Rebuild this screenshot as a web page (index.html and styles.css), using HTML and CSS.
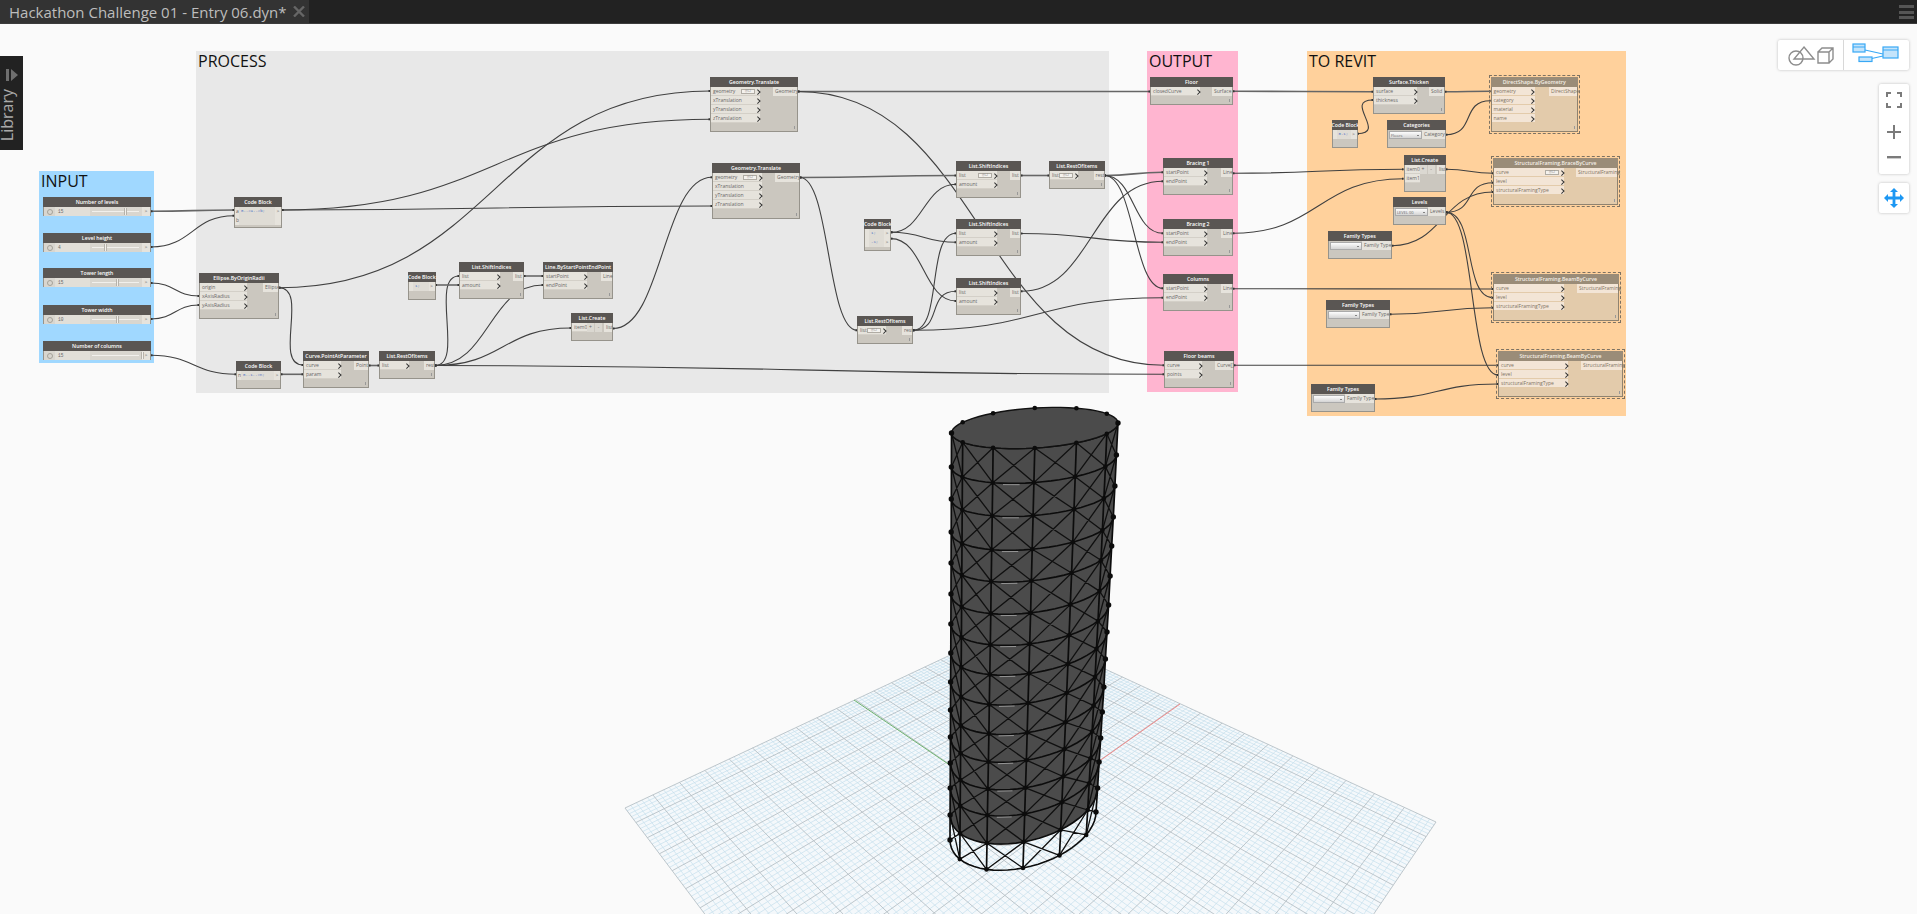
FILE: index.html
```html
<!DOCTYPE html>
<html lang="en">
<head>
    <meta charset="UTF-8">
    <title>Hackathon Challenge 01 - Entry 06.dyn*</title>
    <link rel="stylesheet" href="styles.css">
</head>
<body>
    <div class="titlebar">
        <div class="tab">
            <span class="tab-name">Hackathon Challenge 01 - Entry 06.dyn*</span>
            <svg class="tab-close" width="12" height="11" viewBox="0 0 12 11"><path d="M1 0.5 L11 10.5 M11 0.5 L1 10.5"/></svg>
        </div>
        <div class="menu-btn"><i></i><i></i><i></i></div>
    </div>

    <div class="canvas">
        <div class="world">
            <svg id="scene" class="layer" width="1917" height="914"></svg>

            <div class="group g-input">INPUT</div>
            <div class="group g-process">PROCESS</div>
            <div class="group g-output">OUTPUT</div>
            <div class="group g-revit">TO REVIT</div>

            <svg id="wires" class="layer" width="1917" height="914"></svg>
            <div id="nodes" class="layer"></div>
        </div>

        <div class="library">
            <svg width="12" height="12" viewBox="0 0 12 12"><path d="M0 0h3v12H0z M5 0l7 6-7 6z"/></svg>
            <span>Library</span>
        </div>

        <div class="nav">
            <div class="nav-box switcher">
                <div class="switch-btn">
                    <svg width="48" height="24" viewBox="0 0 48 24">
                        <g fill="none" stroke="#8d8d8d" stroke-width="1.4">
                            <circle cx="9" cy="15" r="7"/>
                            <path d="M17 4 L27 16 L7 16 Z"/>
                            <path d="M31 9 H42 V20 H31 Z M31 9 L35 5 H46 V16 L42 20 M42 9 L46 5"/>
                        </g>
                    </svg>
                </div>
                <div class="switch-btn">
                    <svg width="50" height="24" viewBox="0 0 50 24">
                        <g stroke="#38a8f5" stroke-width="1.2" fill="#c4e4fb">
                            <path d="M13 7 L31 11 M13 17 L31 13" fill="none"/>
                            <rect x="1" y="1" width="12" height="8"/>
                            <rect x="7" y="14" width="13" height="4.5"/>
                            <rect x="31" y="4" width="15" height="11"/>
                            <path d="M1 4 H13 M31 7 H46" fill="none"/>
                        </g>
                    </svg>
                </div>
            </div>
            <div class="nav-box zoomer">
                <svg width="16" height="16" viewBox="0 0 16 16"><path class="ico" d="M0 5V0h5v2H2v3z M11 0h5v5h-2V2h-3z M0 11h2v3h3v2H0z M14 11h2v5h-5v-2h3z"/></svg>
                <svg width="14" height="14" viewBox="0 0 14 14"><path class="ico" d="M6 0h2v6h6v2H8v6H6V8H0V6h6z"/></svg>
                <svg width="14" height="3" viewBox="0 0 14 3"><path class="ico" d="M0 0h14v2.4H0z"/></svg>
            </div>
            <div class="nav-box pan">
                <svg width="20" height="20" viewBox="0 0 20 20"><path fill="#1c97f3" d="M10 0l4 4h-2.6v4.6H16V6l4 4-4 4v-2.6h-4.6V16H14l-4 4-4-4h2.6v-4.6H4V14l-4-4 4-4v2.6h4.6V4H6z"/></svg>
            </div>
        </div>
    </div>

    <script src="graph.js"></script>
</body>
</html>
```

FILE: styles.css
```css
* { box-sizing: border-box; }
html, body { margin: 0; height: 100%; overflow: hidden; }
body { display: flex; flex-direction: column; font-family: "Open Sans", "Liberation Sans", sans-serif; background: #fafafa; }

/* title bar */
.titlebar { height: 24px; flex: none; display: flex; justify-content: space-between; background: #222; border-bottom: 1px solid #3c3c3c; }
.tab { width: 309px; display: flex; align-items: center; background: #333; padding-left: 9px; }
.tab-name { color: #bdbdbd; font-size: 15px; width: 284px; white-space: nowrap; }
.tab-close path { stroke: #666; stroke-width: 2.4; fill: none; }
.menu-btn { width: 15px; margin: 5px 3px 0 0; display: flex; flex-direction: column; gap: 2.5px; }
.menu-btn i { height: 3px; background: #555; }

/* canvas */
.canvas { flex: 1; position: relative; overflow: hidden; background: #fafafa; }
.world { position: absolute; left: 0; top: -24px; width: 1917px; height: 914px; }
.layer { position: absolute; left: 0; top: 0; }

.group { position: absolute; font-size: 16px; line-height: 20px; color: #111; padding-left: 2px; }
.g-input { left: 39px; top: 171px; width: 115px; height: 192px; background: #a0d8ff; }
.g-process { left: 196px; top: 51px; width: 913px; height: 342px; background: #e8e8e8; }
.g-output { left: 1147px; top: 51px; width: 91px; height: 341px; background: #ffb5d0; }
.g-revit { left: 1307px; top: 51px; width: 319px; height: 365px; background: #ffd19c; }

.wire { fill: none; stroke: #404040; stroke-width: 1.1; }
.wire.thick { stroke: #666; stroke-width: 1.6; }
.port-dot { fill: #333; }

/* nodes */
.node { position: absolute; background: #cbc7bf; border: 1px solid #96938b; border-top: 0; font-size: 5px; line-height: 9px; color: #666; }
.node::after { content: ""; position: absolute; right: 2px; bottom: 2px; width: 1px; height: 3px; background: #999; }
.node.plain::after { display: none; }
.node-head { height: 10px; margin: 0 -1px; background: #5a5653; color: #fff; font-size: 5.2px; font-weight: 600; line-height: 10px; text-align: center; white-space: nowrap; overflow: hidden; }
.node-body { display: flex; justify-content: space-between; align-items: flex-start; }
.ports-in, .ports-out { display: flex; flex-direction: column; flex: none; }
.port { position: relative; height: 9px; padding: 0 2px; background: #e6e3dc; border-bottom: 1px solid #d4d0c8; white-space: nowrap; }
.ports-out .port { text-align: right; border-bottom: 0; }
.ports-in .port::after { content: ""; position: absolute; right: 1px; top: 3px; width: 2.5px; height: 2.5px; border-top: 1px solid #333; border-right: 1px solid #333; transform: rotate(45deg); }
.lvl { position: absolute; right: 5px; top: 2px; width: 14px; height: 5px; background: #f4f2ee; border: 1px solid #b0aca4; font-size: 3px; line-height: 3px; color: #888; text-align: center; }

.node.warn { background: #e3cbab; border-color: #8f8370; outline: 1px dashed #7d7263; outline-offset: 1px; color: #7d7263; }
.node.warn .node-head { background: #9a8c78; color: #f5efe6; }
.node.warn .port { background: #f3e5d6; border-bottom-color: #e3cbab; }

/* sliders */
.slider-body { display: flex; height: 9px; background: #d9d6cf; }
.slider-min { width: 11px; display: flex; align-items: center; justify-content: center; }
.slider-min i { width: 6px; height: 6px; border-radius: 50%; border: 1px solid #a5a29a; }
.slider-val { width: 35px; padding-left: 3px; background: #e2dfd8; font-family: "Liberation Mono", monospace; font-size: 4.5px; color: #666; }
.slider-track { position: relative; flex: 1; }
.slider-track::before { content: ""; position: absolute; left: 2px; right: 3px; top: 4px; height: 1px; background: #f2f0ec; }
.slider-thumb { position: absolute; top: 1px; width: 3px; height: 7px; background: #f2f0ec; border: 1px solid #b6b2aa; border-width: 0 1px; }
.slider-out { width: 8px; background: #e6e3dc; text-align: center; font-size: 5px; }

/* code block */
.code-row { display: flex; height: 9px; }
.code-in { width: 4px; background: #e6e3dc; padding-left: 1px; }
.code-text { flex: 1; padding-left: 2px; background: #dfdcd5; font-family: "Liberation Mono", monospace; font-size: 4px; color: #4a6fc4; white-space: nowrap; overflow: hidden; }
.code-out { width: 6px; background: #e6e3dc; text-align: center; }

/* dropdown nodes and list create */
.drop { width: 34px; height: 8px; margin: 1px 0 0 1px; position: relative; padding-left: 1px; line-height: 7px; background: linear-gradient(#fdfdfd, #d4d4d4); border: 1px solid #aaa; font-size: 4px; color: #666; overflow: hidden; }
.drop::after { content: ""; position: absolute; right: 2px; top: 3px; border: 1.2px solid transparent; border-top-color: #222; }
.btns { position: absolute; top: 0; display: flex; gap: 1px; }
.btns b { width: 7px; height: 9px; background: #dbd8d1; font-weight: 400; text-align: center; }
.port.bare::after { display: none; }

/* library tab */
.library { position: absolute; left: 0; top: 32px; width: 23px; height: 94px; background: #222; display: flex; flex-direction: column; align-items: center; overflow: hidden; padding-top: 13px; }
.library svg path { fill: #6f6f6f; }
.library span { writing-mode: vertical-rl; transform: rotate(180deg); color: #a9a9a9; font-size: 16px; line-height: 16px; margin: 8px 0 0 -9px; }

/* navigation buttons */
.nav { position: absolute; right: 8px; top: 16px; display: flex; flex-direction: column; align-items: flex-end; }
.nav-box { background: #fff; border-radius: 2px; box-shadow: 0 0 3px rgba(0, 0, 0, 0.25); display: flex; align-items: center; }
.switcher { width: 131px; height: 30px; }
.switch-btn { flex: 1; height: 100%; display: flex; align-items: center; justify-content: center; }
.switch-btn + .switch-btn { border-left: 1px solid #d8d8d8; }
.zoomer { width: 30px; height: 90px; margin-top: 14px; flex-direction: column; justify-content: space-between; padding: 8px 0 15px; }
.ico { fill: #7b7b7b; }
.pan { width: 30px; height: 30px; margin-top: 9px; justify-content: center; }
```

FILE: graph.js
```js
// x, y, x2, y2 are in screenshot pixels
const nodes = [
    { t: 'Number of levels', kind: 'slider', x: 43, y: 197, val: '15', thumb: 124 },
    { t: 'Level height', kind: 'slider', x: 43, y: 233, val: '4', thumb: 104 },
    { t: 'Tower length', kind: 'slider', x: 43, y: 268, val: '15', thumb: 116 },
    { t: 'Tower width', kind: 'slider', x: 43, y: 305, val: '10', thumb: 116 },
    { t: 'Number of columns', kind: 'slider', x: 43, y: 341, val: '15', thumb: 141 },

    { t: 'Code Block', kind: 'code', x: 234, y: 197, x2: 282, y2: 228, lines: [['a', '0..#a..#b;'], ['b', '']] },
    { t: 'Code Block', kind: 'code', x: 236, y: 361, x2: 281, y2: 389, lines: [['n', '0..1..#n;']] },
    { t: 'Code Block', kind: 'code', x: 408, y: 272, x2: 435.5, y2: 300, lines: [['', '1;']] },
    { t: 'Code Block', kind: 'code', x: 864, y: 219, x2: 891, y2: 251, lines: [['', '1;'], ['', '-1;']] },
    { t: 'Code Block', kind: 'code', x: 1331.5, y: 120, x2: 1357.5, y2: 148, lines: [['', '0.1;']] },

    { t: 'Ellipse.ByOriginRadii', x: 199, y: 273, x2: 279, y2: 319, ins: ['origin', 'xAxisRadius', 'yAxisRadius'], inW: 47, outs: ['Ellipse'], outW: 15 },
    { t: 'Curve.PointAtParameter', x: 303, y: 351, x2: 369, y2: 388, ins: ['curve', 'param'], inW: 37, outs: ['Point'], outW: 14 },
    { t: 'List.RestOfItems', x: 379, y: 351, x2: 435, y2: 379, ins: ['list'], inW: 29, outs: ['rest'], outW: 10 },
    { t: 'List.ShiftIndices', x: 459, y: 262, x2: 524, y2: 299, ins: ['list', 'amount'], inW: 40, outs: ['list'], outW: 10 },
    { t: 'Line.ByStartPointEndPoint', x: 543, y: 262, x2: 613, y2: 299, ins: ['startPoint', 'endPoint'], inW: 43, outs: ['Line'], outW: 11 },
    { t: 'List.Create', kind: 'create', x: 571, y: 313, x2: 613, y2: 341, ins: ['item0'], outs: ['list'] },

    { t: 'Geometry.Translate', x: 710, y: 77, x2: 798, y2: 132, ins: ['*geometry', 'xTranslation', 'yTranslation', 'zTranslation'], inW: 49, outs: ['Geometry'], outW: 24 },
    { t: 'Geometry.Translate', x: 712, y: 163, x2: 800, y2: 219, ins: ['*geometry', 'xTranslation', 'yTranslation', 'zTranslation'], inW: 49, outs: ['Geometry'], outW: 24 },
    { t: 'List.RestOfItems', x: 857, y: 316, x2: 913, y2: 344, ins: ['*list'], inW: 28, outs: ['rest'], outW: 10 },
    { t: 'List.ShiftIndices', x: 956, y: 161, x2: 1021, y2: 198, ins: ['*list', 'amount'], inW: 40, outs: ['list'], outW: 10 },
    { t: 'List.ShiftIndices', x: 956, y: 219, x2: 1021, y2: 256, ins: ['list', 'amount'], inW: 40, outs: ['list'], outW: 10 },
    { t: 'List.ShiftIndices', x: 956, y: 278, x2: 1021, y2: 315, ins: ['list', 'amount'], inW: 40, outs: ['list'], outW: 10 },
    { t: 'List.RestOfItems', x: 1049, y: 161, x2: 1104.5, y2: 189, ins: ['*list'], inW: 28, outs: ['rest'], outW: 10 },

    { t: 'Floor', x: 1150, y: 77, x2: 1233, y2: 105, ins: ['closedCurve'], inW: 49, outs: ['Surface'], outW: 20 },
    { t: 'Bracing 1', x: 1163, y: 158, x2: 1233, y2: 195, ins: ['startPoint', 'endPoint'], inW: 43, outs: ['Line'], outW: 11 },
    { t: 'Bracing 2', x: 1163, y: 219, x2: 1233, y2: 256, ins: ['startPoint', 'endPoint'], inW: 43, outs: ['Line'], outW: 11 },
    { t: 'Columns', x: 1163, y: 274, x2: 1233, y2: 311, ins: ['startPoint', 'endPoint'], inW: 43, outs: ['Line'], outW: 11 },
    { t: 'Floor beams', x: 1164, y: 351, x2: 1234, y2: 388, ins: ['curve', 'points'], inW: 37, outs: ['Curve[]'], outW: 18 },

    { t: 'Surface.Thicken', x: 1373, y: 77, x2: 1445, y2: 114, ins: ['surface', 'thickness'], inW: 43, outs: ['Solid'], outW: 15 },
    { t: 'Categories', kind: 'drop', x: 1387, y: 120, x2: 1446, y2: 148, val: 'Floors', outs: ['Category'], outW: 23 },
    { t: 'List.Create', kind: 'create', x: 1403.5, y: 155, x2: 1446, y2: 192, ins: ['item0', 'item1'], outs: ['list'] },
    { t: 'Levels', kind: 'drop', x: 1393, y: 197, x2: 1446, y2: 225, val: 'LEVEL 00', outs: ['Levels'], outW: 17 },
    { t: 'Family Types', kind: 'drop', x: 1327.5, y: 231, x2: 1392, y2: 259, val: '', outs: ['Family Type'], outW: 29 },
    { t: 'Family Types', kind: 'drop', x: 1326, y: 300, x2: 1390, y2: 328, val: '', outs: ['Family Type'], outW: 29 },
    { t: 'Family Types', kind: 'drop', x: 1311, y: 384, x2: 1375, y2: 412, val: '', outs: ['Family Type'], outW: 29 },

    { t: 'DirectShape.ByGeometry', warn: true, x: 1490.5, y: 77, x2: 1578, y2: 132, ins: ['geometry', 'category', 'material', 'name'], inW: 43, outs: ['DirectShape'], outW: 28 },
    { t: 'StructuralFraming.BraceByCurve', warn: true, x: 1493, y: 158, x2: 1618, y2: 205, ins: ['*curve', 'level', 'structuralFramingType'], inW: 70, outs: ['StructuralFraming'], outW: 41 },
    { t: 'StructuralFraming.BeamByCurve', warn: true, x: 1493, y: 274, x2: 1619, y2: 321, ins: ['curve', 'level', 'structuralFramingType'], inW: 70, outs: ['StructuralFraming'], outW: 41 },
    { t: 'StructuralFraming.BeamByCurve', warn: true, x: 1498, y: 351, x2: 1623, y2: 397, ins: ['curve', 'level', 'structuralFramingType'], inW: 69, outs: ['StructuralFraming'], outW: 41 }
];

// from x, from y, to x, to y, optional thick flag
const wires = [
    [151, 211.3, 234, 210, 1], [151, 247, 234, 215.7], [151, 283, 199, 296], [151, 319, 199, 305], [151, 355.3, 236, 374.3],
    [282, 210, 710, 119.3], [282, 210, 712, 206], [279, 287.7, 710, 91], [279, 287.7, 303, 365],
    [281, 374.3, 303, 374.3, 1], [369, 365.5, 379, 365.5, 1],
    [435, 365.5, 459, 276], [435, 365.5, 543, 285], [435, 365.5, 571, 328], [435, 365.5, 1164, 374.3],
    [524, 276, 543, 276, 1], [435.5, 285, 459, 285, 1], [613, 328.5, 712, 177.3],
    [798, 91.5, 1150, 91.5, 1], [798, 91.5, 1164, 365.3],
    [800, 177.5, 956, 175.5, 1], [800, 177.5, 857, 330.3],
    [891, 232.3, 956, 184.3], [891, 232.3, 956, 242.3], [891, 238.6, 956, 301],
    [913, 330.3, 956, 233.3], [913, 330.3, 956, 291.3], [913, 330.3, 1163, 297.7],
    [1021, 175.5, 1049, 175.5, 1], [1104.5, 175.5, 1163, 172.3, 1], [1104.5, 175.5, 1163, 233.3], [1104.5, 175.5, 1163, 288.3],
    [1021, 233.5, 1163, 242.3], [1021, 291.3, 1163, 181.3],
    [1233, 91.3, 1373, 91.7, 1], [1445, 91.7, 1490.5, 91.3, 1], [1357.5, 133.7, 1373, 100],
    [1446, 134.7, 1490.5, 100.7], [1233, 173.3, 1403.5, 169.3], [1233, 233.3, 1403.5, 178.7],
    [1446, 169.3, 1493, 173.3], [1446, 212.3, 1493, 182.7], [1446, 212.3, 1493, 297.7], [1446, 212.3, 1498, 375],
    [1392, 245.7, 1493, 192], [1233, 288.7, 1493, 289], [1390, 314.3, 1493, 307.7],
    [1234, 365.3, 1498, 365.3], [1375, 399, 1498, 384]
];

function portRows(list, width, cls) {
    const rows = list.map(name => {
        const hasLvl = name[0] === '*';
        const label = hasLvl ? name.slice(1) : name;
        return `<div class="port">${label}${hasLvl ? '<span class="lvl">@L2</span>' : ''}</div>`;
    }).join('');
    return `<div class="${cls}" style="width:${width}px">${rows}</div>`;
}

function nodeBody(n, w) {
    if (n.kind === 'slider') {
        return `<div class="slider-body"><div class="slider-min"><i></i></div><div class="slider-val">${n.val}</div>` +
            `<div class="slider-track"><span class="slider-thumb" style="left:${n.thumb - n.x - 47.5}px"></span></div><div class="slider-out">&gt;</div></div>`;
    }
    if (n.kind === 'code') {
        return n.lines.map(l => `<div class="code-row"><div class="code-in">${l[0]}</div><div class="code-text">${l[1]}</div>` +
            `<div class="code-out">${l[1] ? '&gt;' : ''}</div></div>`).join('');
    }
    if (n.kind === 'drop') {
        return `<div class="node-body"><div class="drop">${n.val}</div>${portRows(n.outs, n.outW, 'ports-out')}</div>`;
    }
    if (n.kind === 'create') {
        const rows = n.ins.map((name, i) => {
            const btns = i === 0 ? `<span class="btns" style="left:15px"><b>+</b><b>-</b></span>` : '';
            return `<div class="port bare">${name}</div>${btns}`;
        }).join('');
        return `<div class="node-body"><div class="ports-in" style="width:15px;position:relative">${rows}</div>${portRows(n.outs, 8, 'ports-out')}</div>`;
    }
    return `<div class="node-body">${portRows(n.ins, n.inW, 'ports-in')}${portRows(n.outs, n.outW, 'ports-out')}</div>`;
}

const nodeHost = document.getElementById('nodes');
nodes.forEach(n => {
    if (n.kind === 'slider') { n.x2 = 151; n.y2 = n.y + 19; }
    const w = n.x2 - n.x;
    const div = document.createElement('div');
    div.className = 'node' + (n.warn ? ' warn' : '') + (n.kind ? ' plain' : '');
    div.style.left = n.x + 'px';
    div.style.top = n.y + 'px';
    div.style.width = w + 'px';
    div.style.height = (n.y2 - n.y) + 'px';
    div.innerHTML = `<div class="node-head">${n.t}</div>` + nodeBody(n, w);
    nodeHost.appendChild(div);
});

// wires
let wireSvg = '';
wires.forEach(([x1, y1, x2, y2, thick]) => {
    const c = Math.max(Math.abs(x2 - x1) / 2, Math.abs(y2 - y1) > 20 ? 30 : 4);
    wireSvg += `<path class="wire${thick ? ' thick' : ''}" d="M${x1} ${y1} C${x1 + c} ${y1} ${x2 - c} ${y2} ${x2} ${y2}"/>`;
    wireSvg += `<rect class="port-dot" x="${x1}" y="${y1 - 1}" width="1.5" height="2"/><rect class="port-dot" x="${x2 - 1.5}" y="${y2 - 1}" width="1.5" height="2"/>`;
});
document.getElementById('wires').innerHTML = wireSvg;

// ground grid: projective map of the unit square onto the screen quad
const quad = [[1012, 626], [1436, 822], [1057, 1382], [625, 808]];
function makeHomography(q) {
    const [[x0, y0], [x1, y1], [x2, y2], [x3, y3]] = q;
    const dx1 = x1 - x2, dx2 = x3 - x2, sx = x0 - x1 + x2 - x3;
    const dy1 = y1 - y2, dy2 = y3 - y2, sy = y0 - y1 + y2 - y3;
    const den = dx1 * dy2 - dx2 * dy1;
    const g = (sx * dy2 - dx2 * sy) / den, h = (dx1 * sy - sx * dy1) / den;
    const a = x1 - x0 + g * x1, b = x3 - x0 + h * x3;
    const d = y1 - y0 + g * y1, e = y3 - y0 + h * y3;
    return (u, v) => {
        const w = g * u + h * v + 1;
        return [((a * u + b * v + x0) / w).toFixed(1), ((d * u + e * v + y0) / w).toFixed(1)];
    };
}
const H = makeHomography(quad);
let minor = '', major = '';
const MAJORS = 20, MINORS = 5, STEPS = MAJORS * MINORS;
for (let i = 0; i <= STEPS; i++) {
    const s = i / STEPS;
    const a = H(s, 0), b = H(s, 1), c = H(0, s), d = H(1, s);
    const seg = `M${a[0]} ${a[1]}L${b[0]} ${b[1]}M${c[0]} ${c[1]}L${d[0]} ${d[1]}`;
    if (i % MINORS === 0) major += seg; else minor += seg;
}
const o = H(0.5, 0.5);
let scene = `<path d="M${quad.map(p => p.join(' ')).join('L')}Z" fill="#f4f8fb"/>` +
    `<path d="${minor}" stroke="#c6dfed" stroke-width="0.7" fill="none"/>` +
    `<path d="${major}" stroke="#b7c1c6" stroke-width="0.9" fill="none"/>` +
    `<path d="M854 700L${o[0]} ${o[1]}" stroke="#6db26d" stroke-width="1"/>` +
    `<path d="M1180 704L${o[0]} ${o[1]}" stroke="#f08a8a" stroke-width="1"/>`;

// tower: 15 rings of 12 points, front half visible
const leftY = [433, 467, 499, 532, 563, 594, 624, 653, 682, 710, 737, 763, 788, 815, 840];
const rightY = [423, 455, 486, 517, 546, 576, 605, 632, 659, 687, 712, 738, 762, 788, 812];
const LEVELS = leftY.length - 1;

function pt(t, deg) {
    const f = t / LEVELS;
    const L = 951.5 - 1.5 * f, R = 1118 - 22 * f;
    const rx = (R - L) / 2, cx = (R + L) / 2;
    const cy = (leftY[t] + rightY[t]) / 2, slope = (rightY[t] - leftY[t]) / (R - L);
    const ry = 20 + 22 * f;
    const c = Math.cos(deg * Math.PI / 180), s = Math.sin(deg * Math.PI / 180);
    return [+(cx + rx * c).toFixed(1), +(cy + ry * s + slope * rx * c).toFixed(1)];
}
function arc(t, from, to) {
    const out = [];
    const step = from < to ? 6 : -6;
    for (let a = from; step > 0 ? a <= to : a >= to; a += step) out.push(pt(t, a).join(' '));
    return out;
}
function line(a, b) { return `M${a[0]} ${a[1]}L${b[0]} ${b[1]}`; }

const BODY_END = LEVELS - 1;
const sideLeft = [], sideRight = [];
for (let t = 0; t <= BODY_END; t++) { sideLeft.push(pt(t, 180).join(' ')); sideRight.unshift(pt(t, 0).join(' ')); }
scene += `<path d="M${sideLeft.concat(arc(BODY_END, 180, 0), sideRight).join('L')}Z" fill="#4b4b4b"/>`;

let rings = '', struts = '', braces = '', dots = '', glints = '';
for (let t = 0; t <= LEVELS; t++) {
    rings += 'M' + arc(t, 0, 180).join('L');
    if (t > 0 && t < LEVELS) {
        const g1 = pt(t, 112), g2 = pt(t, 100);
        glints += line([g1[0], g1[1] + 1.4], [g2[0], g2[1] + 1.4]);
    }
    for (let k = 0; k <= 6; k++) {
        const p = pt(t, k * 30);
        dots += `<circle cx="${p[0]}" cy="${p[1]}" r="${k === 0 || k === 6 ? 2.7 : 2.3}"/>`;
        if (t < LEVELS) {
            struts += line(p, pt(t + 1, k * 30));
            if (k < 6) {
                braces += line(p, pt(t + 1, (k + 1) * 30));
                braces += line(pt(t + 1, k * 30), pt(t, (k + 1) * 30));
            }
        }
    }
}
scene += `<path d="${braces}" stroke="#101010" stroke-width="1.3" fill="none"/>` +
    `<path d="${struts}" stroke="#0c0c0c" stroke-width="1.7" fill="none"/>` +
    `<path d="${rings}" stroke="#0c0c0c" stroke-width="1.6" fill="none"/>` +
    `<path d="${glints}" stroke="#b5b5b5" stroke-width="0.7" fill="none"/>`;

// top slab with its back row of points
scene += `<path d="M${arc(0, 0, 360).join('L')}Z" fill="#4b4b4b" stroke="#111" stroke-width="1.4"/>`;
for (let k = 7; k < 12; k++) {
    const p = pt(0, k * 30);
    dots += `<circle cx="${p[0]}" cy="${p[1]}" r="2.3"/>`;
}
scene += `<g fill="#0c0c0c">${dots}</g>`;
document.getElementById('scene').innerHTML = scene;
```
